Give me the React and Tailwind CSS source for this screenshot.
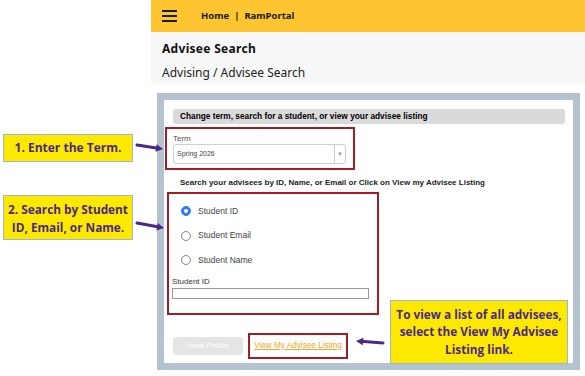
import React from "react";

const Arrow = ({ x1, y1, x2, y2 }) => {
  const ang = Math.atan2(y2 - y1, x2 - x1);
  const len = 8;
  const spread = 0.5;
  const ax = x2 - len * Math.cos(ang - spread);
  const ay = y2 - len * Math.sin(ang - spread);
  const bx = x2 - len * Math.cos(ang + spread);
  const by = y2 - len * Math.sin(ang + spread);
  const ex = x2 - 5 * Math.cos(ang);
  const ey = y2 - 5 * Math.sin(ang);
  return (
    <g>
      <line x1={x1} y1={y1} x2={ex} y2={ey} stroke="#4a2888" strokeWidth="3" strokeLinecap="round" />
      <polygon points={`${x2},${y2} ${ax},${ay} ${bx},${by}`} fill="#4a2888" />
    </g>
  );
};

const Radio = ({ checked, label }) => (
  <div className="flex items-center h-[24.5px]">
    <span
      className={`w-[10px] h-[10px] rounded-full border ${
        checked ? "border-[#2f7cf6] bg-[#2f7cf6]" : "border-[#8a8a8a] bg-white"
      } flex items-center justify-center`}
    >
      {checked && <span className="w-[4px] h-[4px] rounded-full bg-white"></span>}
    </span>
    <span className="ml-[7px] text-[8.5px] text-[#444]">{label}</span>
  </div>
);

const App = () => {
  return (
    <div className="relative w-[585px] h-[376px] overflow-hidden bg-white flex">
      {/* left gutter for callouts */}
      <div className="w-[151px] shrink-0"></div>

      <div className="flex-1 flex flex-col">
        {/* top bar */}
        <div className="h-[32px] bg-[#fdc52f] flex items-center pl-[11px]" style={{ fontFamily: "'Noto Sans', sans-serif" }}>
          <div className="flex flex-col gap-[3px] w-[15px]">
            <span className="h-[2px] bg-[#1a1a1a]"></span>
            <span className="h-[2px] bg-[#1a1a1a]"></span>
            <span className="h-[2px] bg-[#1a1a1a]"></span>
          </div>
          <span className="ml-[24px] text-[9.5px] font-bold text-[#1a1a1a]">Home</span>
          <span className="mx-[5px] text-[9.5px] font-bold text-[#1a1a1a]">|</span>
          <span className="text-[9.5px] font-bold text-[#1a1a1a]">RamPortal</span>
        </div>

        {/* page title */}
        <div className="h-[51px] bg-[#f7f7f7] pl-[11px] pt-[9px]" style={{ fontFamily: "'Noto Sans', sans-serif" }}>
          <div className="text-[12px] font-bold text-[#111] leading-[16px] tracking-[0.3px]">Advisee Search</div>
          <div className="text-[12px] text-[#222] leading-[16px] mt-[8px]">Advising / Advisee Search</div>
        </div>

        {/* frame */}
        <div className="mt-[10px] ml-[6px] w-[423px] h-[277px] border-[7px] border-[#b5c3d1] bg-white" style={{ fontFamily: "'Liberation Sans', Arial, sans-serif" }}>
          <div className="ml-[9px] mt-[9px] w-[392px] h-[15px] rounded-[3px] bg-[#dadada] flex items-center pl-[7px] text-[8.3px] font-bold text-black">
            Change term, search for a student, or view your advisee listing
          </div>

          <div className="ml-[1px] mt-[3px] w-[190px] h-[43px] border-2 border-[#a51d24] pl-[6px] pt-[5px]">
            <div className="text-[8px] text-[#555] leading-[9px]">Term</div>
            <div className="mt-[1px] w-[173px] h-[20px] border border-[#cfcfcf] rounded-[3px] flex items-center">
              <span className="flex-1 pl-[3px] text-[7px] text-[#444]">Spring 2026</span>
              <span className="w-[11px] h-full border-l border-[#cfcfcf] flex items-center justify-center text-[6px] text-[#999]">▼</span>
            </div>
          </div>

          <div className="ml-[16px] mt-[8px] text-[8px] font-bold text-[#222] leading-[10px]">
            Search your advisees by ID, Name, or Email or Click on View my Advisee Listing
          </div>

          <div className="ml-[3px] mt-[4px] w-[212px] h-[123px] border-2 border-[#a51d24] pl-[12px] pt-[5px]">
            <Radio checked label="Student ID" />
            <Radio label="Student Email" />
            <Radio label="Student Name" />
            <div className="-ml-[9px] mt-[4px] text-[8px] text-[#333] leading-[10px]">Student ID</div>
            <div className="-ml-[9px] mt-[1px] w-[197px] h-[11px] border border-[#9a9a9a] bg-white"></div>
          </div>

          <div className="mt-[18px] ml-[9px] flex items-center">
            <div className="w-[70px] h-[18px] rounded-[3px] bg-[#e4e5e7] flex items-center justify-center text-[8px] text-white">
              View Profile
            </div>
            <div className="ml-[5px] w-[100px] h-[26px] border-2 border-[#a51d24] flex items-center justify-center">
              <span className="text-[8.2px] text-[#f5a524] underline">View My Advisee Listing</span>
            </div>
          </div>
        </div>
      </div>

      {/* callouts */}
      <div
        className="absolute left-[3px] top-[134px] w-[130px] h-[28px] bg-[#fde800] border border-[#9fb6cf] flex items-center justify-center text-[12px] font-bold text-[#4a2888]"
        style={{ fontFamily: "'Open Sans', sans-serif" }}
      >
        1. Enter the Term.
      </div>
      <div
        className="absolute left-[3px] top-[195px] w-[130px] h-[45px] bg-[#fde800] border border-[#9fb6cf] flex items-center justify-center text-center text-[11.8px] leading-[18px] font-bold text-[#4a2888]"
        style={{ fontFamily: "'Open Sans', sans-serif" }}
      >
        2. Search by Student
        <br />
        ID, Email, or Name.
      </div>
      <div
        className="absolute left-[390px] top-[300px] w-[178px] h-[64px] bg-[#fde800] border border-[#9fb6cf] flex items-center justify-center text-center text-[11.8px] leading-[17.5px] font-bold text-[#4a2888]"
        style={{ fontFamily: "'Open Sans', sans-serif" }}
      >
        To view a list of all advisees,
        <br />
        select the View My Advisee
        <br />
        Listing link.
      </div>

      {/* arrows */}
      <svg className="absolute left-0 top-0 pointer-events-none" width="585" height="376">
        <Arrow x1={137} y1={145} x2={163} y2={149} />
        <Arrow x1={137} y1={223} x2={164} y2={228} />
        <Arrow x1={383} y1={343} x2={356} y2={341} />
      </svg>
    </div>
  );
};

export default App;
